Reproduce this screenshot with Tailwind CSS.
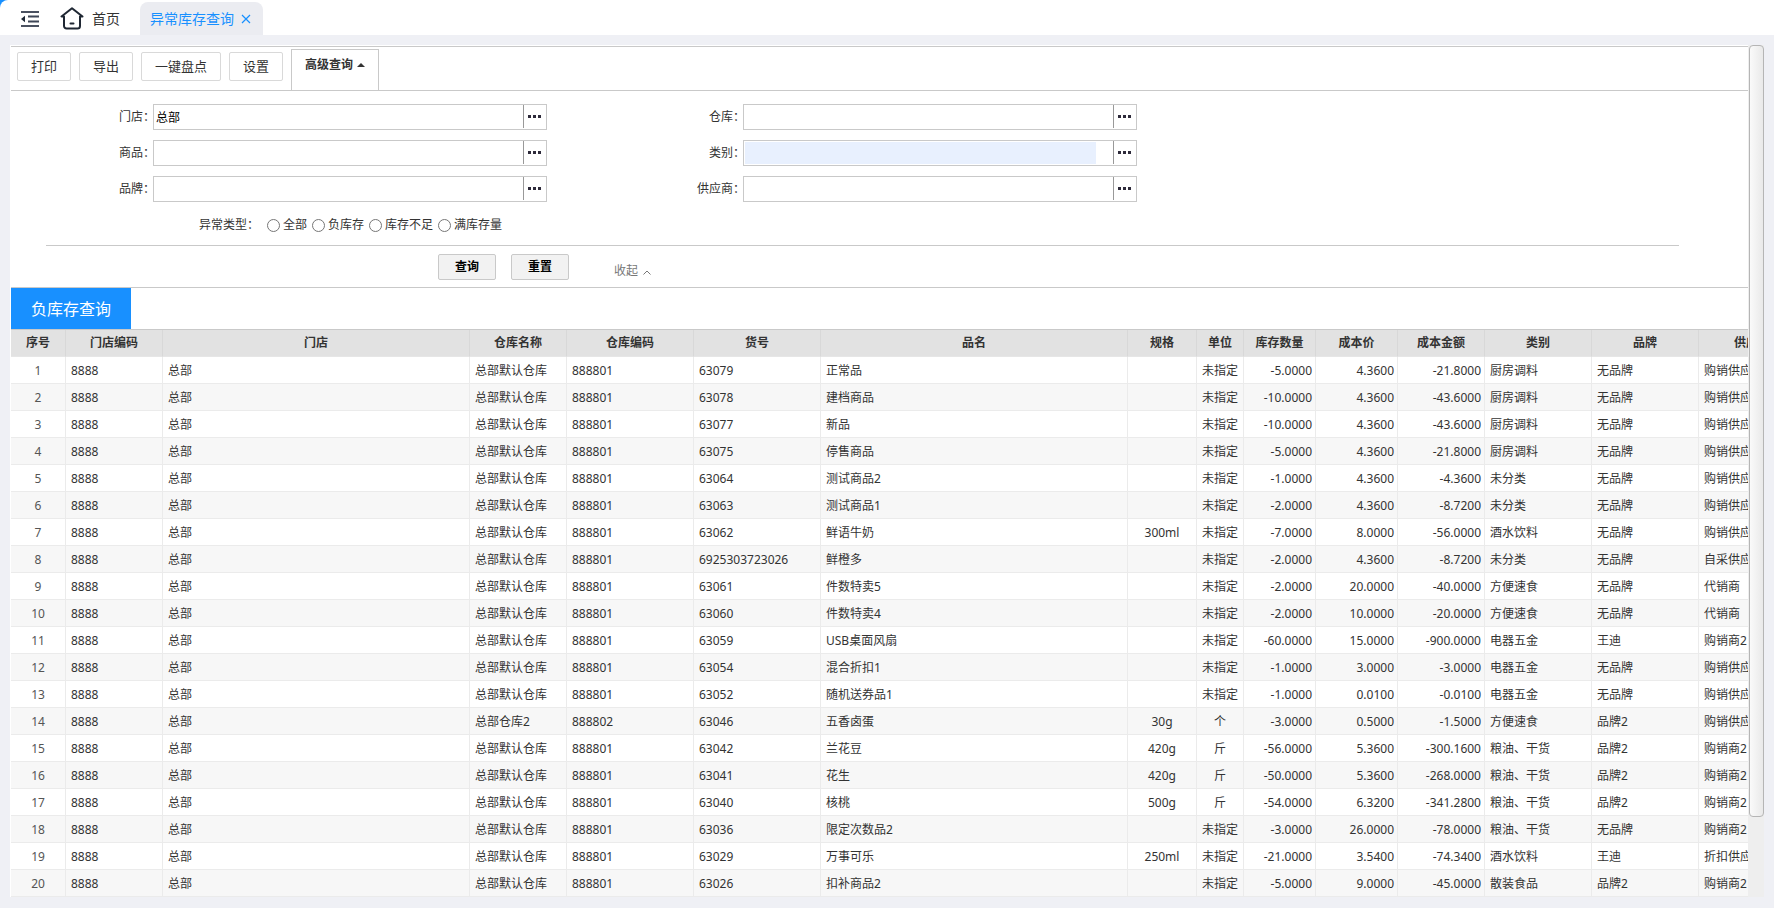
<!DOCTYPE html>
<html lang="zh-CN">
  <head>
    <meta charset="UTF-8" />
    <meta name="viewport" content="width=device-width, initial-scale=1.0" />
    <script src="https://cdn.jsdelivr.net/npm/@tailwindcss/browser@4"></script>
    <title>异常库存查询</title>
  </head>
  <body class="flex h-screen flex-col overflow-hidden bg-[#eff0f5] font-['Noto_Sans','Noto_Sans_CJK_SC',sans-serif] text-xs text-[#333]">
    <!-- Top tabs -->
    <div class="shrink-0 bg-[#1890ff]">
      <header class="flex h-[35px] items-end rounded-tl-lg bg-white">
        <button aria-label="收起菜单" class="ml-[21px] flex h-[33px] items-center">
          <svg class="h-4 w-[18px]" viewBox="0 0 18 16" fill="none" stroke="#4a5160" stroke-width="2">
            <path d="M0 1h18M0 15h18" />
            <path d="M7 5.500h11M7 10.500h11" stroke="#3f4757" stroke-width="1.800" />
            <path d="M0 8l4-3.200v6.400z" fill="#1f2937" stroke="none" />
          </svg>
        </button>
        <a href="#" class="ml-[21px] flex h-[33px] items-center gap-2 text-sm">
          <svg class="h-[23px] w-6" viewBox="0 0 24 23" fill="none" stroke="#1f2733" stroke-width="2" stroke-linejoin="round" stroke-linecap="round">
            <path d="M12 1.200L1.500 9.500H4v9.500a2.500 2.500 0 0 0 2.500 2.500h11a2.500 2.500 0 0 0 2.500-2.500V9.500h2.500z" />
            <path d="M10.500 16.500h3" />
          </svg>
          首页
        </a>
        <div class="ml-5 flex h-[33px] items-center gap-[7px] rounded-t-lg bg-[#ebecf1] pr-3 pl-[10px] text-sm text-[#1890ff]">
          <a href="#">异常库存查询</a>
          <button aria-label="关闭">
            <svg class="size-[10px]" viewBox="0 0 10 10" stroke="#1890ff" stroke-width="1.200" fill="none"><path d="M1 1l8 8M9 1l-8 8" /></svg>
          </button>
        </div>
      </header>
    </div>

    <div class="mx-[10px] mt-[10px] mb-[11px] flex min-h-0 flex-1">
      <main class="min-w-0 flex-1 overflow-hidden bg-white pt-px pl-px">
        <!-- Toolbar -->
        <div class="flex h-[45px] gap-2 border-y border-[#c9c9c9] pl-[6px]">
          <button class="mt-[5px] h-[29px] rounded-xs border border-[#d9d9d9] px-[13px] text-[13px]">打印</button>
          <button class="mt-[5px] h-[29px] rounded-xs border border-[#d9d9d9] px-[13px] text-[13px]">导出</button>
          <button class="mt-[5px] h-[29px] rounded-xs border border-[#d9d9d9] px-[13px] text-[13px]">一键盘点</button>
          <button class="mt-[5px] h-[29px] rounded-xs border border-[#d9d9d9] px-[13px] text-[13px]">设置</button>
          <button class="mt-[2px] flex items-center gap-1 border border-b-0 border-[#c9c9c9] px-[13px] pb-[10px] font-bold">
            高级查询
            <span class="border-x-4 border-b-4 border-x-transparent border-b-[#333]"></span>
          </button>
        </div>

        <!-- Search form -->
        <form class="border-b border-[#c9c9c9]">
          <div id="fields" class="grid grid-cols-[536px_590px] gap-y-[10px] pt-[13px]"></div>
          <fieldset class="mt-[12px] ml-[188px] flex h-5 items-center">
            <legend class="float-left mr-2 w-[60px] pt-0.5 leading-5">异常类型：</legend>
            <label class="flex items-center gap-[3px] pr-[5px] pt-px"><input type="radio" name="kind" class="mt-0.5 size-[13px]" />全部</label>
            <label class="flex items-center gap-[3px] pr-[5px] pt-px"><input type="radio" name="kind" class="mt-0.5 size-[13px]" />负库存</label>
            <label class="flex items-center gap-[3px] pr-[5px] pt-px"><input type="radio" name="kind" class="mt-0.5 size-[13px]" />库存不足</label>
            <label class="flex items-center gap-[3px] pt-px"><input type="radio" name="kind" class="mt-0.5 size-[13px]" />满库存量</label>
          </fieldset>
          <div class="mt-[11px] mr-[69px] ml-[35px] border-t border-[#c9c9c9]"></div>
          <div class="flex h-[41px] pt-2 pl-[427px]">
            <button type="button" class="h-[26px] w-[58px] rounded-xs border border-[#c9c9c9] bg-[#f2f2f2] font-bold text-black">查询</button>
            <button type="button" class="ml-[15px] h-[26px] w-[58px] rounded-xs border border-[#c9c9c9] bg-[#f2f2f2] font-bold text-black">重置</button>
            <button type="button" class="mt-2 ml-[45px] flex h-[18px] items-center gap-[5px] text-[#777]">
              收起
              <svg class="mt-0.5 h-[5px] w-2" viewBox="0 0 8 5" fill="none" stroke="#777"><path d="M.5 4.500L4 1l3.500 3.500" /></svg>
            </button>
          </div>
        </form>

        <div class="flex h-[42px] border-b border-[#c9c9c9]">
          <h2 class="flex w-[120px] items-center justify-center bg-[#1890ff] text-base text-white">负库存查询</h2>
        </div>

        <!-- Stock table -->
        <table class="w-[1795px] table-fixed border-separate border-spacing-0">
          <colgroup>
            <col class="w-[55px]" />
            <col class="w-[97px]" />
            <col class="w-[307px]" />
            <col class="w-[97px]" />
            <col class="w-[127px]" />
            <col class="w-[127px]" />
            <col class="w-[307px]" />
            <col class="w-[69px]" />
            <col class="w-[47px]" />
            <col class="w-[72px]" />
            <col class="w-[82px]" />
            <col class="w-[87px]" />
            <col class="w-[107px]" />
            <col class="w-[107px]" />
            <col class="w-[107px]" />
          </colgroup>
          <thead>
            <tr id="head" class="h-[27px] bg-[#e2e2e2]"></tr>
          </thead>
          <tbody id="rows"></tbody>
        </table>
      </main>

      <!-- Scrollbar -->
      <div class="w-4 shrink-0 bg-[#eee] pl-px">
        <div class="h-[772px] w-[15px] rounded-sm border border-[#b5b5b5] bg-linear-to-r from-[#fafafa] to-[#e9e9e9]"></div>
      </div>
    </div>

    <script>
      const fields = [
        ['门店', '总部'], ['仓库', ''],
        ['商品', ''], ['类别', ''],
        ['品牌', ''], ['供应商', ''],
      ];

      document.getElementById('fields').innerHTML = fields.map(([name, value], i) => `
        <div class="flex h-[26px] justify-end">
          <label for="field${i}" class="-mr-0.5 pt-1 leading-[18px]">${name}：</label>
          <div class="flex w-[394px] border border-[#c9c9c9] p-px">
            <input id="field${i}" type="text" value="${value}" class="w-[351px] px-px pt-0.5 text-black outline-none ${name === '类别' ? 'bg-[#e8f0fe]' : ''}" />
            <button type="button" aria-label="选择${name}" class="-mt-px ml-auto flex w-[22px] items-center justify-center gap-0.5 border-l border-[#999]">
              <i class="size-[3px] bg-[#2d2a3a]"></i><i class="size-[3px] bg-[#2d2a3a]"></i><i class="size-[3px] bg-[#2d2a3a]"></i>
            </button>
          </div>
        </div>`).join('');

      const columns = ['序号', '门店编码', '门店', '仓库名称', '仓库编码', '货号', '品名', '规格', '单位', '库存数量', '成本价', '成本金额', '类别', '品牌', '供应商'];

      document.getElementById('head').innerHTML = columns.map((c) =>
        `<th class="border-r border-b border-[#d8d8d8] border-b-[#e6e6e6] p-0 leading-4 font-bold">${c}</th>`).join('');

      // item no, name, spec, unit, quantity, cost, amount, category, brand, supplier
      const stock = [
        ['63079', '正常品', '', '未指定', '-5.0000', '4.3600', '-21.8000', '厨房调料', '无品牌', '购销供应商'],
        ['63078', '建档商品', '', '未指定', '-10.0000', '4.3600', '-43.6000', '厨房调料', '无品牌', '购销供应商'],
        ['63077', '新品', '', '未指定', '-10.0000', '4.3600', '-43.6000', '厨房调料', '无品牌', '购销供应商'],
        ['63075', '停售商品', '', '未指定', '-5.0000', '4.3600', '-21.8000', '厨房调料', '无品牌', '购销供应商'],
        ['63064', '测试商品2', '', '未指定', '-1.0000', '4.3600', '-4.3600', '未分类', '无品牌', '购销供应商'],
        ['63063', '测试商品1', '', '未指定', '-2.0000', '4.3600', '-8.7200', '未分类', '无品牌', '购销供应商'],
        ['63062', '鲜语牛奶', '300ml', '未指定', '-7.0000', '8.0000', '-56.0000', '酒水饮料', '无品牌', '购销供应商'],
        ['6925303723026', '鲜橙多', '', '未指定', '-2.0000', '4.3600', '-8.7200', '未分类', '无品牌', '自采供应商'],
        ['63061', '件数特卖5', '', '未指定', '-2.0000', '20.0000', '-40.0000', '方便速食', '无品牌', '代销商'],
        ['63060', '件数特卖4', '', '未指定', '-2.0000', '10.0000', '-20.0000', '方便速食', '无品牌', '代销商'],
        ['63059', 'USB桌面风扇', '', '未指定', '-60.0000', '15.0000', '-900.0000', '电器五金', '王迪', '购销商2'],
        ['63054', '混合折扣1', '', '未指定', '-1.0000', '3.0000', '-3.0000', '电器五金', '无品牌', '购销供应商'],
        ['63052', '随机送券品1', '', '未指定', '-1.0000', '0.0100', '-0.0100', '电器五金', '无品牌', '购销供应商'],
        ['63046', '五香卤蛋', '30g', '个', '-3.0000', '0.5000', '-1.5000', '方便速食', '品牌2', '购销供应商'],
        ['63042', '兰花豆', '420g', '斤', '-56.0000', '5.3600', '-300.1600', '粮油、干货', '品牌2', '购销商2'],
        ['63041', '花生', '420g', '斤', '-50.0000', '5.3600', '-268.0000', '粮油、干货', '品牌2', '购销商2'],
        ['63040', '核桃', '500g', '斤', '-54.0000', '6.3200', '-341.2800', '粮油、干货', '品牌2', '购销商2'],
        ['63036', '限定次数品2', '', '未指定', '-3.0000', '26.0000', '-78.0000', '粮油、干货', '无品牌', '购销商2'],
        ['63029', '万事可乐', '250ml', '未指定', '-21.0000', '3.5400', '-74.3400', '酒水饮料', '王迪', '折扣供应商'],
        ['63026', '扣补商品2', '', '未指定', '-5.0000', '9.0000', '-45.0000', '散装食品', '品牌2', '购销商2'],
      ];

      const align = (i) => {
        if (i === 0) return 'px-[5px] text-center text-[#555]';
        if (i === 7 || i === 8) return 'px-[5px] text-center';
        if (i >= 9 && i <= 11) return 'px-[3px] text-right';
        return 'px-[5px] text-left';
      };

      document.getElementById('rows').innerHTML = stock.map((item, n) => {
        const second = item[0] === '63046';
        const cells = [n + 1, '8888', '总部', second ? '总部仓库2' : '总部默认仓库', second ? '888802' : '888801', ...item];
        return `<tr class="h-[27px] bg-white even:bg-[#f7f7f7]">${cells.map((c, i) =>
          `<td class="border-r border-b border-[#ebebeb] pt-0.5 pb-0 leading-4 whitespace-nowrap ${align(i)}">${c}</td>`).join('')}</tr>`;
      }).join('');
    </script>
  </body>
</html>
